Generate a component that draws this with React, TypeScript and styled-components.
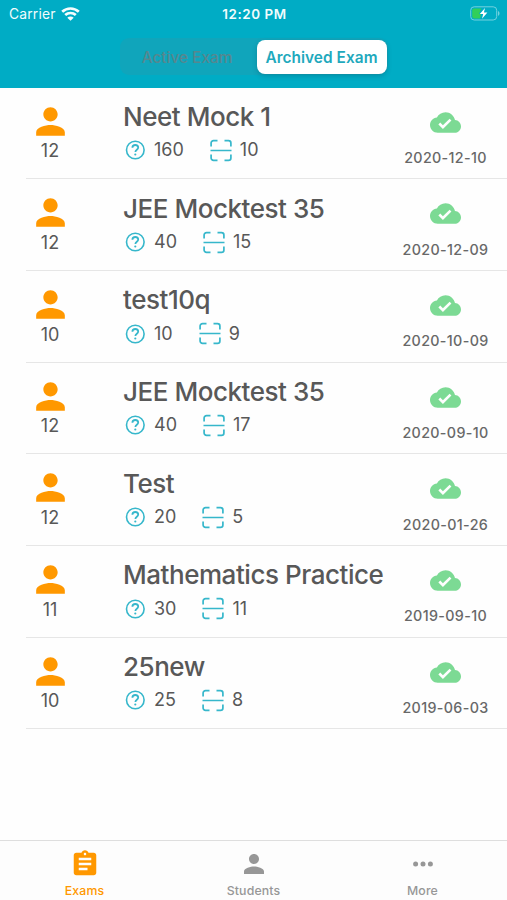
import React from "react";
import styled, { createGlobalStyle } from "styled-components";

const GlobalStyle = createGlobalStyle`
  *, *::before, *::after { box-sizing: border-box; }
  body { margin: 0; background: #fefefe; }
`;

const Screen = styled.div`
  width: 507px;
  height: 900px;
  display: flex;
  flex-direction: column;
  overflow: hidden;
  background: #fefefe;
  font-family: Inter, "Liberation Sans", sans-serif;
  color: #585858;
`;

const Header = styled.header`
  flex: none;
  height: 87.8px;
  background: #00acc5;
`;

const StatusBar = styled.div`
  height: 28px;
  display: grid;
  grid-template-columns: 1fr auto 1fr;
  align-items: center;
  padding: 0 7px 0 9px;
  color: #f2fcfd;
  font-size: 13.8px;
  line-height: 28px;
`;

const Carrier = styled.div`
  display: flex;
  align-items: center;
  gap: 5px;
  letter-spacing: 0.2px;
`;

const Clock = styled.div`
  font-size: 13.4px;
  font-weight: 600;
  letter-spacing: 0.6px;
`;

const BatterySlot = styled.div`
  display: flex;
  justify-content: flex-end;
  transform: translateY(-1px);
`;

const Segments = styled.div`
  width: 268px;
  height: 37px;
  margin: 10px 0 0 120px;
  padding: 1.5px;
  display: flex;
  border-radius: 9px;
  background: #10a5bb;
`;

const Segment = styled.button<{ $active?: boolean }>`
  width: ${(p) => (p.$active ? "130px" : "135px")};
  flex: none;
  padding: ${(p) => (p.$active ? "1px 0 0" : "1px 4px 0 0")};
  border: 0;
  border-radius: 8px;
  font: ${(p) => (p.$active ? 600 : 500)} 15.4px Inter, sans-serif;
  letter-spacing: ${(p) => (p.$active ? "0.05px" : "0")};
  color: ${(p) => (p.$active ? "#1fa9bd" : "#56878f")};
  background: ${(p) => (p.$active ? "#fff" : "transparent")};
  box-shadow: ${(p) => (p.$active ? "0 2px 5px rgba(0, 60, 80, 0.25)" : "none")};
`;

const List = styled.main`
  flex: 1;
  min-height: 0;
`;

const Row = styled.article`
  height: 91.65px;
  margin-left: 26px;
  display: grid;
  grid-template-columns: 48px 49px minmax(0, 1fr) 123px;
  border-bottom: 1.4px solid #e6e6e6;
`;

const Students = styled.div`
  display: flex;
  flex-direction: column;
  align-items: center;
  padding-top: 12px;

  svg { height: 43px; }
`;

const Count = styled.span`
  margin-top: -2.4px;
  font-size: 18px;
  line-height: 22px;
  letter-spacing: 0;
`;

const Details = styled.div`
  grid-column: 3;
  padding-top: 12.2px;
  white-space: nowrap;
`;

const Title = styled.h2`
  margin: 0;
  font-size: 26px;
  line-height: 34px;
  font-weight: 500;
  letter-spacing: -0.46px;
`;

const Stats = styled.div`
  display: flex;
  align-items: center;
  height: 32px;
  font-size: 18px;
`;

const Questions = styled.span`
  display: flex;
  align-items: center;
  gap: 8px;
  margin: 0 26px 0 2px;
`;

const Scans = styled.span`
  display: flex;
  align-items: center;
  gap: 8px;
`;

const Sync = styled.div`
  display: flex;
  flex-direction: column;
  align-items: center;
  padding-top: 19px;
`;

const ExamDate = styled.time`
  margin-top: 10.4px;
  font-size: 14.3px;
  font-weight: 500;
  line-height: 20px;
  letter-spacing: 0.35px;
  color: #686868;
`;

const TabBar = styled.nav`
  flex: none;
  height: 60px;
  display: grid;
  grid-template-columns: repeat(3, 1fr);
  border-top: 1.4px solid #dedede;
  background: #fdfdfd;
`;

const Tab = styled.div<{ $active?: boolean }>`
  display: flex;
  flex-direction: column;
  align-items: center;
  padding-top: 7.6px;
  color: ${(p) => (p.$active ? "#ff9800" : "#979797")};
  font-size: 12.3px;
  font-weight: 500;
  line-height: 16px;
  letter-spacing: 0.15px;
`;

const TabIcon = styled.div`
  height: 34.6px;
  display: flex;
  align-items: flex-start;
`;

const PersonIcon = ({ size, color }: { size: number; color: string }) => (
  <svg width={size} height={size} viewBox="0 0 24 24" fill={color}>
    <path d="M12 12c2.21 0 4-1.79 4-4s-1.79-4-4-4-4 1.79-4 4 1.79 4 4 4zm0 2c-2.67 0-8 1.34-8 4v2h16v-2c0-2.66-5.33-4-8-4z" />
  </svg>
);

const WifiIcon = () => (
  <svg width="19" height="15" viewBox="0 0 19 15" fill="none" stroke="#f5fdfe" strokeWidth="2.7">
    <path d="M1.2 4.8C6 .4 13 .4 17.8 4.8M4.2 8.1c3-2.8 7.6-2.8 10.6 0" />
    <path d="M9.5 13.8 6.3 10.7c1.7-1.5 4.7-1.5 6.4 0z" fill="#f5fdfe" stroke="none" />
  </svg>
);

const BatteryIcon = () => (
  <svg width="30" height="15" viewBox="0 0 30 15">
    <rect x="0.7" y="0.8" width="26" height="13.2" rx="3.5" fill="none" stroke="#73d2df" />
    <path d="M4 2.5h7.4L9 8h2l-.8 4.4H4A1.8 1.8 0 0 1 2.2 10.6V4.3A1.8 1.8 0 0 1 4 2.5z" fill="#31cf5a" />
    <path d="M28 5c2 .8 2 4 0 4.8z" fill="#73d2df" />
    <path d="M15 2 9.8 8.1h3.4L12 12.8l5.4-6.3h-3.5z" fill="#fff" />
  </svg>
);

const QuestionIcon = () => (
  <svg width="21" height="21" viewBox="0 0 21 21" fill="none" stroke="#36b7cb" strokeWidth="1.6">
    <circle cx="10.3" cy="11" r="8.8" />
    <path d="M7.4 8.8c0-1.7 1.2-2.8 2.9-2.8s2.9 1 2.9 2.6c0 2.2-2.8 2.2-2.8 4.5" strokeWidth="1.8" />
    <circle cx="10.3" cy="15.5" r="1.1" fill="#36b7cb" stroke="none" />
  </svg>
);

const ScanIcon = () => (
  <svg width="22" height="22" viewBox="0 0 22 22" fill="none" stroke="#36b7cb" strokeWidth="1.7" overflow="visible">
    <path transform="translate(0 .5)" d="M1.1 7V3.5a2.4 2.4 0 0 1 2.4-2.4h4M14.5 1.1h4a2.4 2.4 0 0 1 2.4 2.4V7M20.9 15v3.5a2.4 2.4 0 0 1-2.4 2.4h-4M7.5 20.9h-4a2.4 2.4 0 0 1-2.4-2.4V15M.5 11h21" />
  </svg>
);

const CloudDoneIcon = () => (
  <svg width="31" height="31" viewBox="0 0 24 24" fill="#7cda94">
    <path d="M19.35 10.04C18.67 6.59 15.64 4 12 4 9.11 4 6.6 5.64 5.35 8.04 2.34 8.36 0 10.91 0 14c0 3.31 2.69 6 6 6h13c2.76 0 5-2.24 5-5 0-2.64-2.05-4.78-4.65-4.96zM10 17l-3.5-3.5 1.41-1.41L10 14.17 15.18 9l1.41 1.41L10 17z" />
  </svg>
);

const ClipboardIcon = () => (
  <svg width="30" height="30" viewBox="0 0 24 24" fill="#ff9800">
    <path d="M19 3h-4.18C14.4 1.84 13.3 1 12 1c-1.3 0-2.4.84-2.82 2H5c-1.1 0-2 .9-2 2v14c0 1.1.9 2 2 2h14c1.1 0 2-.9 2-2V5c0-1.1-.9-2-2-2zm-7 0c.55 0 1 .45 1 1s-.45 1-1 1-1-.45-1-1 .45-1 1-1zm2 14H7v-2h7v2zm3-4H7v-2h10v2zm0-4H7V7h10v2z" />
  </svg>
);

const MoreIcon = () => (
  <svg width="30" height="30" viewBox="0 0 30 30" fill="#979797">
    <circle cx="7.6" cy="15" r="2.5" />
    <circle cx="15" cy="15" r="2.5" />
    <circle cx="22.4" cy="15" r="2.5" />
  </svg>
);

const exams = [
  { title: "Neet Mock 1", students: 12, questions: 160, scans: 10, date: "2020-12-10" },
  { title: "JEE Mocktest 35", students: 12, questions: 40, scans: 15, date: "2020-12-09" },
  { title: "test10q", students: 10, questions: 10, scans: 9, date: "2020-10-09" },
  { title: "JEE Mocktest 35", students: 12, questions: 40, scans: 17, date: "2020-09-10" },
  { title: "Test", students: 12, questions: 20, scans: 5, date: "2020-01-26" },
  { title: "Mathematics Practice", students: 11, questions: 30, scans: 11, date: "2019-09-10" },
  { title: "25new", students: 10, questions: 25, scans: 8, date: "2019-06-03" },
];

export default function App() {
  return (
    <Screen>
      <GlobalStyle />
      <Header>
        <StatusBar>
          <Carrier>Carrier <WifiIcon /></Carrier>
          <Clock>12:20 PM</Clock>
          <BatterySlot><BatteryIcon /></BatterySlot>
        </StatusBar>
        <Segments>
          <Segment>Active Exam</Segment>
          <Segment $active>Archived Exam</Segment>
        </Segments>
      </Header>
      <List>
        {exams.map((exam) => (
          <Row key={exam.date}>
            <Students>
              <PersonIcon size={43} color="#ff9800" />
              <Count>{exam.students}</Count>
            </Students>
            <Details>
              <Title>{exam.title}</Title>
              <Stats>
                <Questions><QuestionIcon />{exam.questions}</Questions>
                <Scans><ScanIcon />{exam.scans}</Scans>
              </Stats>
            </Details>
            <Sync>
              <CloudDoneIcon />
              <ExamDate>{exam.date}</ExamDate>
            </Sync>
          </Row>
        ))}
      </List>
      <TabBar>
        <Tab $active><TabIcon><ClipboardIcon /></TabIcon>Exams</Tab>
        <Tab><TabIcon><PersonIcon size={30} color="#979797" /></TabIcon>Students</Tab>
        <Tab><TabIcon><MoreIcon /></TabIcon>More</Tab>
      </TabBar>
    </Screen>
  );
}
